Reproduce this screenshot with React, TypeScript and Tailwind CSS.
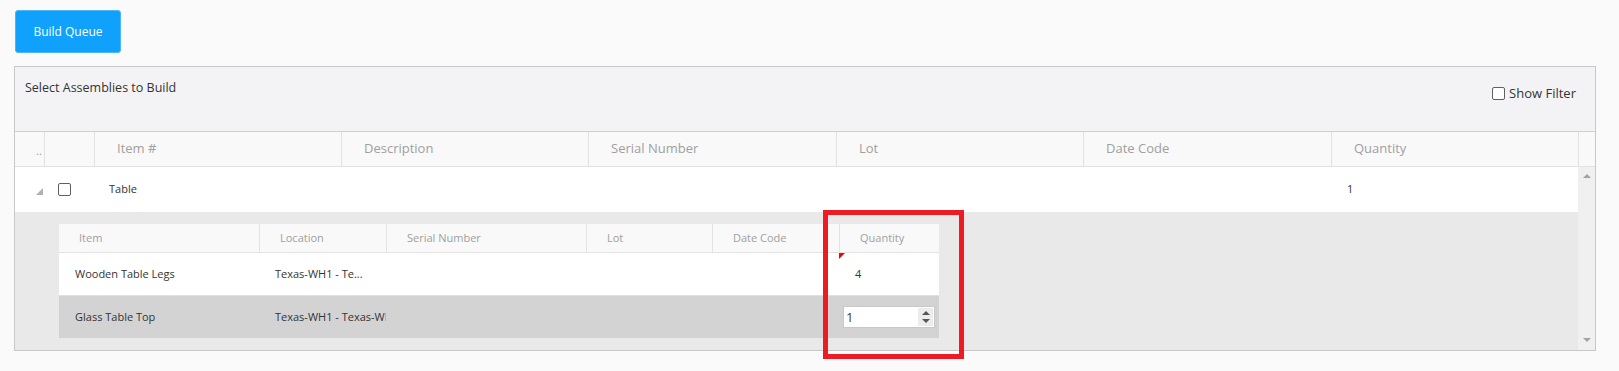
import React from "react";

const mainCols = [
  { label: "Item #", w: "w-[247px]" },
  { label: "Description", w: "w-[247px]" },
  { label: "Serial Number", w: "w-[248px]" },
  { label: "Lot", w: "w-[247px]" },
  { label: "Date Code", w: "w-[248px]" },
  { label: "Quantity", w: "w-[247px]" },
];

const nestedCols = [
  { label: "Item", w: "w-[200px]" },
  { label: "Location", w: "w-[127px]" },
  { label: "Serial Number", w: "w-[200px]" },
  { label: "Lot", w: "w-[126px]" },
  { label: "Date Code", w: "w-[127px]" },
  { label: "Quantity", w: "w-[100px]" },
];

function Checkbox() {
  return <div className="w-[13px] h-[13px] rounded-[2px] border border-[#5f5f5f] bg-white shrink-0" />;
}

export default function App() {
  return (
    <div className="relative min-h-screen bg-[#fafafa] pt-[10px] font-['Open_Sans',sans-serif] text-[#333]">
      <button className="ml-[15px] h-[43px] w-[106px] rounded-[3px] border border-[#4cb6fb] bg-[#10a1fd] text-[12px] text-white">
        Build Queue
      </button>

      <div className="mt-[13px] ml-[14px] w-[1582px] border border-[#c8c8c8] bg-white">
        {/* toolbar */}
        <div className="flex h-[65px] items-start justify-between border-b border-[#d0d0d0] bg-[#f3f3f5] pl-[10px] pr-[19px]">
          <div className="pt-[12px] text-[12.5px] leading-[18px] text-[#333]">Select Assemblies to Build</div>
          <div className="flex items-center gap-[4px] pt-[17px]">
            <Checkbox />
            <span className="text-[13px] leading-[18px] text-[#333]">Show Filter</span>
          </div>
        </div>

        {/* header */}
        <div className="flex h-[35px] border-b border-[#e2e2e2] bg-[#f9f9f9] text-[13px] text-[#a0a0a0]">
          <div className="flex w-[29px] items-center overflow-hidden pl-[21px] pt-[4px] text-[11px]">..</div>
          <div className="w-[50px] border-l border-[#e2e2e2]" />
          {mainCols.map((c) => (
            <div key={c.label} className={`${c.w} flex items-center border-l border-[#e2e2e2] pl-[22px]`}>
              {c.label}
            </div>
          ))}
          <div className="w-[17px] border-l border-[#e2e2e2]" />
        </div>

        {/* body */}
        <div className="flex">
          <div className="w-[1563px]">
            {/* master row */}
            <div className="flex h-[45px] items-center bg-white text-[11px] text-[#333]">
              <div className="flex w-[29px] items-center pl-[21px] pt-[4px]">
                <svg width="7" height="7" viewBox="0 0 7 7">
                  <polygon points="7,0 7,7 0,7" fill="#b0b0b0" />
                </svg>
              </div>
              <div className="flex w-[50px] items-center pl-[14px]">
                <Checkbox />
              </div>
              <div className="w-[247px] pl-[15px]">Table</div>
              <div className="w-[247px]" />
              <div className="w-[248px]" />
              <div className="w-[247px]" />
              <div className="w-[248px]" />
              <div className="w-[247px] pl-[16px]">1</div>
            </div>

            {/* detail row */}
            <div className="flex h-[138px] bg-[#e9e9e9]">
              <div className="w-[29px]" />
              <div className="py-[12px] pl-[15px]">
                <div className="w-[880px]">
                  <div className="flex h-[29px] border-b border-[#e3e3e3] bg-[#f9f9f9] text-[11px] text-[#a0a0a0]">
                    {nestedCols.map((c, i) => (
                      <div
                        key={c.label + i}
                        className={`${c.w} flex items-center pl-[20px] ${i > 0 ? "border-l border-[#e3e3e3]" : ""}`}
                      >
                        {c.label}
                      </div>
                    ))}
                  </div>
                  <div className="flex h-[43px] border-b border-[#e0e0e0] bg-white text-[11px] text-[#333]">
                    <div className="flex w-[200px] items-center pl-[16px]">Wooden Table Legs</div>
                    <div className="flex w-[127px] items-center pl-[16px]">Texas-WH1 - Te...</div>
                    <div className="w-[200px]" />
                    <div className="w-[126px]" />
                    <div className="w-[127px]" />
                    <div className="relative flex w-[100px] items-center pl-[16px]">
                      <svg className="absolute left-0 top-0" width="6" height="6" viewBox="0 0 6 6">
                        <polygon points="0,0 6,0 0,6" fill="#ff0000" />
                      </svg>
                      4
                    </div>
                  </div>
                  <div className="flex h-[42px] bg-[#d3d3d3] text-[11px] text-[#333]">
                    <div className="flex w-[200px] items-center pl-[16px]">Glass Table Top</div>
                    <div className="flex w-[127px] items-center overflow-hidden whitespace-nowrap pl-[16px]">
                      Texas-WH1 - Texas-WH1
                    </div>
                    <div className="w-[200px]" />
                    <div className="w-[126px]" />
                    <div className="w-[127px]" />
                    <div className="flex w-[100px] items-center pl-[4px]">
                      <div className="flex h-[22px] w-[92px] items-center border border-[#c8c8c8] bg-white">
                        <span className="flex-1 pl-[2px] text-[13px] leading-none text-[#3a3a3a]">1</span>
                        <div className="mr-[1px] flex h-[18px] w-[15px] flex-col items-center justify-center gap-[4px] bg-[#ececec]">
                          <svg width="8" height="4" viewBox="0 0 8 4">
                            <polygon points="4,0 8,4 0,4" fill="#555" />
                          </svg>
                          <svg width="8" height="4" viewBox="0 0 8 4">
                            <polygon points="0,0 8,0 4,4" fill="#555" />
                          </svg>
                        </div>
                      </div>
                    </div>
                  </div>
                </div>
              </div>
            </div>
          </div>

          {/* scrollbar */}
          <div className="flex w-[17px] flex-col items-center justify-between bg-[#f0f0f0] pb-[8px] pt-[7px]">
            <svg width="8" height="4" viewBox="0 0 8 4">
              <polygon points="4,0 8,4 0,4" fill="#a3a3a3" />
            </svg>
            <svg width="8" height="4" viewBox="0 0 8 4">
              <polygon points="0,0 8,0 4,4" fill="#a3a3a3" />
            </svg>
          </div>
        </div>
      </div>

      {/* annotation */}
      <div className="pointer-events-none absolute left-[823px] top-[210px] h-[149px] w-[141px] border-[5px] border-[#ed1c24]" />
    </div>
  );
}
